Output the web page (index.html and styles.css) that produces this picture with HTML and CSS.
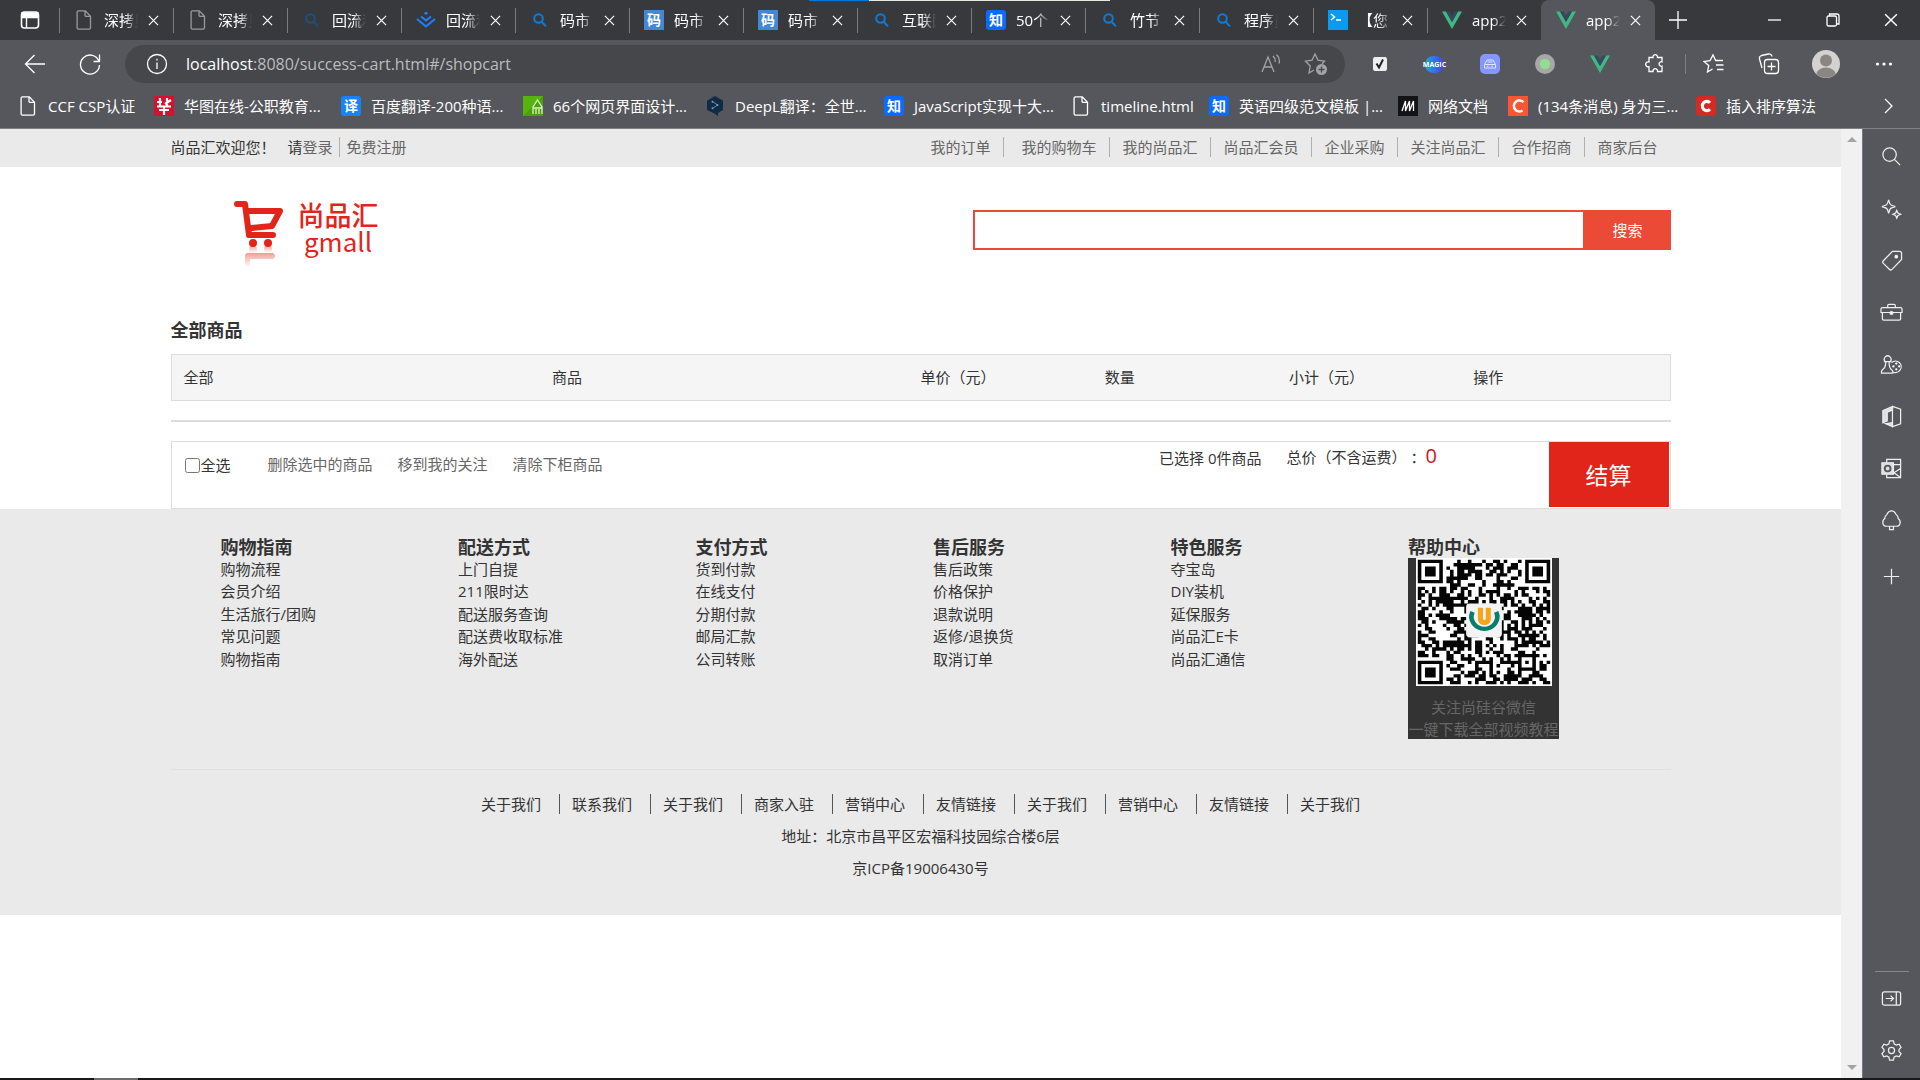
FILE: index.html
```html
<!DOCTYPE html>
<html lang="zh-CN">
<head>
<meta charset="utf-8">
<title>app2</title>
<link rel="stylesheet" href="styles.css">
</head>
<body>
<svg class="defs" aria-hidden="true">
  <symbol id="i-file" viewBox="0 0 20 20"><path d="M4.500 .8h6.800l5.200 5.400v11.600a1.400 1.400 0 0 1-1.400 1.400H4.500a1.400 1.400 0 0 1-1.400-1.400V2.200A1.400 1.400 0 0 1 4.500.8zM11 1v4.200a1.200 1.200 0 0 0 1.200 1.200h4"/></symbol>
  <symbol id="i-find" viewBox="0 0 20 20"><circle cx="8.500" cy="8.500" r="4.300"/><path d="M11.600 11.800l4.400 4.600"/></symbol>
  <symbol id="i-x" viewBox="0 0 12 12"><path d="M1 1l10 10M11 1L1 11"/></symbol>
  <symbol id="i-vue" viewBox="0 0 20 20"><path fill="#41b883" d="M0 1.500h4L10 12l6-10.500h4L10 19z"/><path fill="#34495e" d="M4 1.500h3.800L10 5.400l2.200-3.900H16L10 12z"/></symbol>
</svg>

<header class="chrome">
  <i class="load-done"></i><i class="load-rest"></i>
  <div class="tabs">
    <button class="tab-menu" aria-label="标签页操作"><svg width="20" height="20" viewBox="0 0 20 20"><rect x="1.500" y="2" width="17" height="16" rx="3" fill="none" stroke="#fff" stroke-width="1.600"/><path d="M2 3h16v4.500H2z" fill="#fff"/><path d="M6.500 7v11" stroke="#fff" stroke-width="1.400"/></svg></button>
    <div class="tab"><svg class="fav line dim"><use href="#i-file"/></svg><span>深拷贝</span><button aria-label="关闭"><svg><use href="#i-x"/></svg></button></div>
    <div class="tab"><svg class="fav line dim"><use href="#i-file"/></svg><span>深拷贝</span><button aria-label="关闭"><svg><use href="#i-x"/></svg></button></div>
    <div class="tab"><svg class="fav find dark"><use href="#i-find"/></svg><span>回流和</span><button aria-label="关闭"><svg><use href="#i-x"/></svg></button></div>
    <div class="tab"><svg class="fav" viewBox="0 0 20 20" fill="none" stroke="#1e80ff" stroke-width="2"><path d="M1 9l9 7.500L19 9M5 6.500l5 4 5-4"/><path d="M10 1.500l2.200 1.800L10 5 7.800 3.300z" fill="#1e80ff" stroke="none"/></svg><span>回流和</span><button aria-label="关闭"><svg><use href="#i-x"/></svg></button></div>
    <div class="tab"><svg class="fav find"><use href="#i-find"/></svg><span>码市</span><button aria-label="关闭"><svg><use href="#i-x"/></svg></button></div>
    <div class="tab"><b class="fav word ma">码</b><span>码市</span><button aria-label="关闭"><svg><use href="#i-x"/></svg></button></div>
    <div class="tab"><b class="fav word ma">码</b><span>码市</span><button aria-label="关闭"><svg><use href="#i-x"/></svg></button></div>
    <div class="tab"><svg class="fav find"><use href="#i-find"/></svg><span>互联网</span><button aria-label="关闭"><svg><use href="#i-x"/></svg></button></div>
    <div class="tab"><b class="fav word zhi">知</b><span>50个</span><button aria-label="关闭"><svg><use href="#i-x"/></svg></button></div>
    <div class="tab"><svg class="fav find"><use href="#i-find"/></svg><span>竹节</span><button aria-label="关闭"><svg><use href="#i-x"/></svg></button></div>
    <div class="tab"><svg class="fav find"><use href="#i-find"/></svg><span>程序员</span><button aria-label="关闭"><svg><use href="#i-x"/></svg></button></div>
    <div class="tab"><svg class="fav" viewBox="0 0 20 20"><path fill="#0a9bf0" d="M0 0h20v20H0z"/><path d="M3 4l3.500 3L3 10M8 10h5" fill="none" stroke="#fff" stroke-width="1.500"/></svg><span>【您</span><button aria-label="关闭"><svg><use href="#i-x"/></svg></button></div>
    <div class="tab"><svg class="fav"><use href="#i-vue"/></svg><span>app2</span><button aria-label="关闭"><svg><use href="#i-x"/></svg></button></div>
    <div class="tab active"><svg class="fav"><use href="#i-vue"/></svg><span>app2</span><button aria-label="关闭"><svg><use href="#i-x"/></svg></button></div>
    <button class="new-tab" aria-label="新建标签页"><svg width="18" height="18" viewBox="0 0 18 18"><path d="M9 0v18M0 9h18"/></svg></button>
    <div class="window-buttons">
      <button aria-label="最小化"><svg width="14" height="14" viewBox="0 0 14 14"><path d="M0 7h13"/></svg></button>
      <button aria-label="还原"><svg width="14" height="14" viewBox="0 0 14 14"><rect x="1" y="3" width="9.500" height="10" rx="1.500"/><path d="M3.500 3V1H11a2 2 0 0 1 2 2v8h-2"/></svg></button>
      <button aria-label="关闭窗口"><svg width="14" height="14" viewBox="0 0 12 12"><use href="#i-x"/></svg></button>
    </div>
  </div>

  <div class="toolbar">
    <button class="back" aria-label="后退"><svg width="22" height="22" viewBox="0 0 22 22"><path d="M21 11H2M10.500 2L1.500 11l9 9"/></svg></button>
    <button class="reload" aria-label="刷新"><svg width="22" height="22" viewBox="0 0 22 22"><path d="M20 8.500A9.500 9.500 0 1 0 20.500 12M20.500 1.500v7h-6"/></svg></button>
    <div class="address">
      <svg width="22" height="22" viewBox="0 0 22 22"><circle cx="11" cy="11" r="9.500"/><path d="M11 9.500v6.500M11 5.800v1.800"/></svg>
      <span class="url"><em>localhost</em>:8080/success-cart.html#/shopcart</span>
      <svg class="muted" width="22" height="22" viewBox="0 0 22 22"><path d="M2 19L8 4l6 15M4 14h8M13 3q3 3 2 6M16.500 1.500q4 4 2.500 9"/></svg>
      <svg class="muted" width="24" height="24" viewBox="0 0 24 24"><path d="M10 18l-5 3 1.200-7L1.500 9.200l6.500-1L11 2l3 6.200 6.500 1-2.500 2.500"/><circle cx="17.500" cy="17.500" r="5.500" fill="#a3a4a7" stroke="none"/><path d="M17.500 14.500v6M14.500 17.500h6" stroke="#46474b"/></svg>
    </div>
    <div class="extensions">
      <button aria-label="待办"><svg width="16" height="16" viewBox="0 0 16 16"><rect x="1" y="1" width="14" height="14" rx="2" fill="#eee" stroke="none"/><path d="M4.500 7.500l2.500 4 4-8" stroke="#222" stroke-width="2"/></svg></button>
      <button class="magic" aria-label="Magic"><b>MAGIC</b></button>
      <button aria-label="助手"><svg width="20" height="20" viewBox="0 0 20 20"><rect width="20" height="20" rx="5" fill="#8497ff" stroke="none"/><path d="M4.500 14V10.500L7 6h6l2.500 4.500V14zM5 10.500h10M7.500 8h5M7 12.300h1.500M11.500 12.300H13" stroke="#dfe4ff" stroke-width="1"/></svg></button>
      <button aria-label="状态"><svg width="20" height="20" viewBox="0 0 20 20"><circle cx="10" cy="10" r="10" fill="#a7a7a7" stroke="none"/><circle cx="10" cy="10" r="5.200" fill="#93dc93" stroke="none"/></svg></button>
      <button aria-label="Vue"><svg class="plain" width="20" height="20"><use href="#i-vue"/></svg></button>
      <button aria-label="扩展"><svg width="20" height="20" viewBox="0 0 20 20"><path d="M4 3.500h4a2.300 2.300 0 1 1 4.500 0H17v4.300a2.300 2.300 0 1 0 0 4.400v5.300h-4.500a2.300 2.300 0 1 0-4.500 0H4v-4.800a2.500 2.500 0 1 1 0-4.700z"/></svg></button>
    </div>
    <div class="tools">
      <button aria-label="收藏夹"><svg width="22" height="22" viewBox="0 0 22 22"><path d="M9.500 16l-5 3 1.200-6.500L1 8.500l6-.8L10 2l2.700 5.500H20M13 12h7.500M14 16.500h6.500"/></svg></button>
      <button aria-label="集锦"><svg width="22" height="22" viewBox="0 0 22 22"><rect x="6.500" y="6.500" width="14" height="14" rx="3"/><path d="M13.500 9.500v8M9.500 13.500h8M4 15l-2.500-9a3 3 0 0 1 2-3.500l7-1.500a3 3 0 0 1 3.500 2.500"/></svg></button>
      <button aria-label="个人资料"><svg width="28" height="28" viewBox="0 0 28 28"><g stroke="none"><circle cx="14" cy="14" r="14" fill="#d4d2cf"/><circle cx="14" cy="10.500" r="6" fill="#8a8683"/><path d="M4.500 24a9.500 6.500 0 0 1 19 0A14 14 0 0 1 4.500 24z" fill="#8a8683"/></g></svg></button>
      <button aria-label="更多"><svg width="18" height="6" viewBox="0 0 18 6"><g fill="#fff" stroke="none"><circle cx="2.500" cy="3" r="1.600"/><circle cx="9" cy="3" r="1.600"/><circle cx="15.500" cy="3" r="1.600"/></g></svg></button>
    </div>
  </div>

  <nav class="bookmarks">
    <a href="#"><svg class="fav line"><use href="#i-file"/></svg>CCF CSP认证</a>
    <a href="#"><svg class="fav" viewBox="0 0 20 20"><rect width="20" height="20" rx="1" fill="#d6112e"/><path d="M3 10.500h14M10 10v9M6 2v8M3 6h5M13 2v8M17 4l-6 4M5 14h10" stroke="#fff" stroke-width="2.200"/></svg>华图在线-公职教育...</a>
    <a href="#"><b class="fav word yi">译</b>百度翻译-200种语...</a>
    <a href="#"><svg class="fav" viewBox="0 0 20 20"><path fill="#57b30e" d="M0 0h20v20H0z"/><path fill="#3d9206" d="M0 20L20 0v20z" opacity=".5"/><path d="M10 18v-7l4.500-7 4.500 7v7M10 12h9M13 13v5M16 13v5" fill="none" stroke="#d9f3c0" stroke-width="1.300"/></svg>66个网页界面设计...</a>
    <a href="#"><svg class="fav" viewBox="0 0 20 20"><path fill="#0f2b46" d="M10 0l8 4.700v9.200l-5 3V20l-4-2.700-7-3.400V4.700z"/><path d="M7.500 5.500L12.500 9l-5 3.500" fill="none" stroke="#6e8aa3"/><g fill="#7d98b0"><circle cx="7.500" cy="5.800" r="1"/><circle cx="12.500" cy="9" r="1"/><circle cx="7.500" cy="12.200" r="1"/></g></svg>DeepL翻译：全世...</a>
    <a href="#"><b class="fav word zhi">知</b>JavaScript实现十大...</a>
    <a href="#"><svg class="fav line"><use href="#i-file"/></svg>timeline.html</a>
    <a href="#"><b class="fav word zhi">知</b>英语四级范文模板 |...</a>
    <a href="#"><svg class="fav" viewBox="0 0 20 20"><path fill="#121217" d="M0 0h20v20H0z"/><path d="M4 15L7.500 5v10L11.500 5v10L15.500 5v10" fill="none" stroke="#fff" stroke-width="1.300"/></svg>网络文档</a>
    <a href="#"><svg class="fav" viewBox="0 0 20 20"><path fill="#fc5531" d="M0 0h20v20H0z"/><path d="M15.500 6.200A5.500 5.500 0 1 0 14.500 14.500" fill="none" stroke="#fff" stroke-width="2.600"/></svg>(134条消息) 身为三...</a>
    <a href="#"><svg class="fav" viewBox="0 0 20 20"><rect width="20" height="20" rx="3" fill="#d32a23"/><path d="M14 6.800A4.400 4.700 0 1 0 14 13.200" fill="none" stroke="#fff" stroke-width="3.200"/></svg>插入排序算法</a>
    <button aria-label="更多书签"><svg width="10" height="16" viewBox="0 0 10 16"><path d="M1 1l7 7-7 7"/></svg></button>
  </nav>
</header>

<div class="window">
  <div class="page">
    <div class="topbar">
      <div class="container topbar-row">
        <p><span class="welcome">尚品汇欢迎您！</span>请<a href="#">登录</a><a href="#" class="register">免费注册</a></p>
        <ul>
          <li><a href="#">我的订单</a></li><li><a href="#">我的购物车</a></li><li><a href="#">我的尚品汇</a></li><li><a href="#">尚品汇会员</a></li><li><a href="#">企业采购</a></li><li><a href="#">关注尚品汇</a></li><li><a href="#">合作招商</a></li><li><a href="#">商家后台</a></li>
        </ul>
      </div>
    </div>

    <div class="container masthead">
      <a href="#" class="logo">
        <svg width="50" height="68" viewBox="0 0 50 68">
          <defs><linearGradient id="fade" x1="0" y1="0" x2="0" y2="1"><stop offset="0" stop-color="#e1251b" stop-opacity=".45"/><stop offset="1" stop-color="#e1251b" stop-opacity="0"/></linearGradient></defs>
          <g fill="none" stroke="#e1251b" stroke-width="6" stroke-linecap="round" stroke-linejoin="round"><path d="M3 4h8l4 31h24M14 11h32l-8 15-20 2"/></g>
          <circle cx="19" cy="43" r="4" fill="#e1251b"/><circle cx="34" cy="43" r="4" fill="#e1251b"/>
          <g fill="url(#fade)"><circle cx="19" cy="49" r="4"/><circle cx="34" cy="49" r="4"/><path d="M11 56q0-3 3-3h25q4 3 0 6H16v8h-5z"/></g>
        </svg>
        <span class="logo-text"><span class="cn">尚品汇</span><span class="en">gmall</span></span>
      </a>
      <form class="search"><input type="text" aria-label="搜索商品"><button type="button">搜索</button></form>
    </div>

    <main class="container">
      <h4>全部商品</h4>
      <table class="cart-head">
        <colgroup><col span="2" class="wide"><col span="4"></colgroup>
        <thead><tr><th>全部</th><th>商品</th><th>单价（元）</th><th>数量</th><th>小计（元）</th><th>操作</th></tr></thead>
      </table>
      <div class="cart-list"></div>
      <div class="cart-tool">
        <label><input type="checkbox">全选</label>
        <div class="options"><a href="#">删除选中的商品</a><a href="#">移到我的关注</a><a href="#">清除下柜商品</a></div>
        <div class="chosen">已选择 0件商品</div>
        <div class="sum">总价（不含运费） ：<strong>0</strong></div>
        <button type="button">结算</button>
      </div>
    </main>

    <footer>
      <div class="container">
        <div class="guides">
          <section><h4>购物指南</h4><ul><li>购物流程</li><li>会员介绍</li><li>生活旅行/团购</li><li>常见问题</li><li>购物指南</li></ul></section>
          <section><h4>配送方式</h4><ul><li>上门自提</li><li>211限时达</li><li>配送服务查询</li><li>配送费收取标准</li><li>海外配送</li></ul></section>
          <section><h4>支付方式</h4><ul><li>货到付款</li><li>在线支付</li><li>分期付款</li><li>邮局汇款</li><li>公司转账</li></ul></section>
          <section><h4>售后服务</h4><ul><li>售后政策</li><li>价格保护</li><li>退款说明</li><li>返修/退换货</li><li>取消订单</li></ul></section>
          <section><h4>特色服务</h4><ul><li>夺宝岛</li><li>DIY装机</li><li>延保服务</li><li>尚品汇E卡</li><li>尚品汇通信</li></ul></section>
          <section><h4>帮助中心</h4>
            <div class="wechat">
              <svg width="136" height="128" viewBox="0 0 38 38" preserveAspectRatio="none">
                <path fill="#fff" d="M0 0h38v38H0z"/><path id="qr" fill="#050505"/>
                <rect x="14" y="13.500" width="10" height="10" rx="1" fill="#f3f3f3"/>
                <path d="M15.800 16a3.600 3.600 0 1 0 6.600 0" fill="none" stroke="#087d6c" stroke-width="1.300"/>
                <path d="M18 14.800v3.500a1.200 1.500 0 0 0 2.200 0v-3.500" fill="none" stroke="#f7a518" stroke-width="1.400"/>
              </svg>
              <p>关注尚硅谷微信</p><p>一键下载全部视频教程</p>
            </div>
          </section>
        </div>
        <ul class="links"><li>关于我们</li><li>联系我们</li><li>关于我们</li><li>商家入驻</li><li>营销中心</li><li>友情链接</li><li>关于我们</li><li>营销中心</li><li>友情链接</li><li>关于我们</li></ul>
        <p class="legal">地址：北京市昌平区宏福科技园综合楼6层</p>
        <p class="legal">京ICP备19006430号</p>
      </div>
    </footer>
  </div>

  <div class="scrollbar"><i class="up"></i><i class="down"></i></div>

  <aside class="sidebar">
    <button aria-label="搜索"><svg viewBox="0 0 24 24"><circle cx="10" cy="10" r="7"/><path d="M15 15l6 6"/></svg></button>
    <button aria-label="发现"><svg viewBox="0 0 24 24"><path d="M9 3q1 4 2 5t5 2q-4 1-5 2t-2 5q-1-4-2-5t-5-2q4-1 5-2t2-5zM17.500 14l1.200 2.800 2.800 1.200-2.800 1.200-1.200 2.800-1.200-2.800-2.800-1.200 2.800-1.200z"/></svg></button>
    <button aria-label="购物"><svg viewBox="0 0 24 24"><path d="M13 2.500h7.500a2 2 0 0 1 2 2V11L12.500 21.200a2 2 0 0 1-2.800 0L3.500 15a2 2 0 0 1 0-2.800z"/><circle cx="17" cy="8" r="1.300" fill="#fff"/></svg></button>
    <button aria-label="工具"><svg viewBox="0 0 24 24"><path d="M8 7V5a1.500 1.500 0 0 1 1.500-1.500h5A1.500 1.500 0 0 1 16 5v2M1 8.500Q1 7 2.500 7h19Q23 7 23 8.500V12H1zM2.500 12v6.500q0 1.500 1.500 1.500h16q1.500 0 1.500-1.500V12"/><circle cx="12" cy="12.500" r="1.500" fill="#fff"/></svg></button>
    <button aria-label="游戏"><svg viewBox="0 0 24 24"><path d="M5.500 9a3.500 3.500 0 1 1 5 0M4 9h8M6 9.500q0 6-3 7.500Q1 18.500 1.500 21h12q.5-2.500-2-4-2-2-2-7.500M12 10a6 6 0 1 1 1 9.500"/><g fill="#fff" stroke="none"><circle cx="17" cy="11" r="1.200"/><circle cx="14" cy="14" r="1.200"/><circle cx="20" cy="14" r="1.200"/><circle cx="17" cy="17" r="1.200"/></g></svg></button>
    <button aria-label="Office"><svg viewBox="0 0 24 24"><path d="M13 1.500l8.500 2.800v15.400L13 22.500V2"/><path d="M13 1.500v3.800L7.500 7.500v9L3 18.500V5.800zM6 19.500l7-1v4z" fill="#ddd"/></svg></button>
    <button aria-label="Outlook"><svg viewBox="0 0 24 24"><path d="M7 6V2.500h14.500v19H7V18M14 8h7.500M21.500 12l-7 4.500 7 5"/><path d="M2 6h12v12H2z" fill="#ddd"/><circle cx="8" cy="12" r="3" stroke="#56575c" stroke-width="2"/></svg></button>
    <button aria-label="树"><svg viewBox="0 0 24 24"><path d="M12 2c3 0 4 2 5 4 2 1 2 3 2 4 3 2 3 8-2 8H7c-5 0-5-6-2-8 0-1 0-3 2-4 1-2 2-4 5-4zM10 18v3.500h4V18"/></svg></button>
    <button class="add" aria-label="添加"><svg viewBox="0 0 24 24"><path d="M12 4v16M4 12h16"/></svg></button>
    <hr>
    <button aria-label="隐藏侧栏"><svg viewBox="0 0 24 24"><rect x="2.500" y="5" width="19" height="14" rx="2"/><path d="M17 5v14M6 12h8M11 9l3 3-3 3"/></svg></button>
    <button aria-label="设置"><svg viewBox="0 0 24 24"><path d="M10 2h4l.7 3 2.300 1.300 3-.9 2 3.400L19.800 11v2l2.200 2.200-2 3.400-3-.9-2.300 1.300-.7 3h-4l-.7-3L7 17.700l-3 .9-2-3.400L4.200 13v-2L2 8.800l2-3.400 3 .9L9.300 5z"/><circle cx="12" cy="12" r="3.200"/></svg></button>
  </aside>
</div>
<div class="taskbar"></div>
<script src="qr.js"></script>
</body>
</html>
```
FILE: styles.css
```css
* { box-sizing: border-box; margin: 0; padding: 0; }
body { height: 100vh; display: flex; flex-direction: column; overflow: hidden; font: 15px/22px "Open Sans", "Noto Sans CJK SC", sans-serif; color: #333; background: #fff; }
ul { list-style: none; }
a { color: inherit; text-decoration: none; }
em { font-style: normal; }
button { border: 0; background: none; font: inherit; color: inherit; display: flex; align-items: center; justify-content: center; flex: none; }
.defs { position: absolute; width: 0; height: 0; }

/* browser frame */
.chrome { position: relative; flex: none; color: #fff; background: #56575c; border-bottom: 1px solid #808185; }
.chrome button svg, .address svg, .sidebar svg { fill: none; stroke: #fff; stroke-width: 1.300; }
.chrome svg.plain { stroke: none; }
.chrome .address .muted { stroke: #a3a4a7; }
.load-done, .load-rest { position: absolute; top: 0; height: 1px; }
.load-done { left: 809px; width: 60px; background: #0078d7; }
.load-rest { left: 869px; width: 241px; background: #e3e8e3; }
.tabs { height: 40px; display: flex; align-items: center; background: #38393d; }
.tab-menu { width: 59px; }
.tab { width: 114px; height: 40px; flex: none; display: flex; align-items: center; padding-left: 15px; background: linear-gradient(#7a7b7e, #7a7b7e) left center / 1px 25px no-repeat; }
.tab.active { background: #56575c; border-radius: 8px 8px 0 0; }
.fav { width: 20px; height: 20px; flex: none; }
.tab span { width: 34px; margin-left: 10px; overflow: hidden; white-space: nowrap; -webkit-mask-image: linear-gradient(90deg, #000 60%, transparent); mask-image: linear-gradient(90deg, #000 60%, transparent); }
.tab button { width: 10px; margin-left: 10px; }
.tab button svg { width: 11px; height: 11px; flex: none; }
.line { fill: none; stroke: #fff; stroke-width: 1.300; }
.dim { stroke: #98999b; }
.find { fill: none; stroke: #0f7bd8; stroke-width: 2; }
.find.dark { stroke: #1d507c; }
.word { font-size: 14px; line-height: 20px; text-align: center; color: #fff; border-radius: 3px; }
.ma { background: #4387d9; border-radius: 0; }
.zhi { background: #0a6cff; }
.yi { background: #1683fb; }
.new-tab { width: 46px; }
.window-buttons { display: flex; margin-left: auto; }
.window-buttons button { width: 58px; height: 40px; }

.toolbar { height: 48px; display: flex; align-items: center; }
.toolbar .back { width: 70px; }
.toolbar .reload { width: 40px; margin-right: 15px; }
.address { flex: 1; height: 38px; display: flex; align-items: center; gap: 22px; padding: 0 17px 0 21px; border-radius: 19px; background: #46474b; }
.url { flex: 1; margin-left: -4px; font-size: 16px; color: #bbbcbe; }
.url em { color: #fff; }
.extensions, .tools { display: flex; align-items: center; }
.extensions { margin-left: 7px; }
.extensions button, .tools button { width: 55px; height: 30px; }
.tools { border-left: 1px solid #7d7e82; height: 20px; margin-left: 3px; padding-right: 9px; }
.tools button:nth-child(3) { width: 60px; }
.magic b { width: 19px; height: 17px; border-radius: 9px; background: linear-gradient(90deg, #19a9df, #4a3cf0); font-size: 7px; line-height: 17px; display: flex; justify-content: center; }

.bookmarks { height: 40px; padding-left: 18px; display: grid; grid-template-columns: 136px 187px 182px 182px 179px 187px 138px 189px 110px 188px 162px 1fr; align-items: center; padding-bottom: 5px; }
.bookmarks a { display: flex; align-items: center; gap: 10px; white-space: nowrap; }

.window { flex: 1; min-height: 0; display: flex; }
.page { flex: 1; min-width: 0; overflow: hidden; }
.scrollbar { width: 21px; padding: 8px 5px; display: flex; flex-direction: column; justify-content: space-between; align-items: center; background: #f1f1f1; }
.scrollbar i { width: 0; height: 0; border: 5px solid transparent; }
.scrollbar .up { border-top: 0; border-bottom-color: #a3a3a3; }
.scrollbar .down { border-bottom: 0; border-top-color: #a3a3a3; }
.sidebar { width: 58px; display: flex; flex-direction: column; align-items: center; padding: 1px 0 2px; background: #56575c; border-left: 1px solid #77787c; }
.sidebar button { width: 48px; height: 52px; }
.sidebar .add { height: 60px; }
.sidebar svg { width: 23px; height: 23px; stroke: #eee; }
.sidebar hr { width: 34px; margin-top: auto; border: 0; border-top: 1px solid #85868a; }
.taskbar { flex: none; height: 2px; background: linear-gradient(90deg, #17181a 94px, #6b6c6e 94px, #6b6c6e 138px, #17181a 138px); }

/* shop */
.container { width: 1500px; max-width: 100%; margin: 0 auto; }
.topbar { background: #eaeaea; }
.topbar-row { height: 38px; display: flex; justify-content: space-between; align-items: center; padding-bottom: 2px; }
.topbar a { color: #666; }
.topbar ul { display: flex; }
.topbar li { padding: 0 13px 0 12px; line-height: 20px; }
.topbar li + li { border-left: 1px solid #b3aeae; }
.topbar li:nth-child(2) { padding-left: 17px; }
.welcome { margin-right: 12px; }
.register { display: inline-block; line-height: 20px; margin-left: 6px; padding-left: 7px; border-left: 1px solid #b3aeae; }
.masthead { height: 150px; display: flex; justify-content: space-between; align-items: flex-start; }
.logo { display: flex; gap: 14px; padding: 33px 0 0 63px; color: #e1251b; }
.logo-text { display: flex; flex-direction: column; align-items: center; font-family: "Noto Sans CJK SC", sans-serif; font-weight: 500; }
.logo-text .cn { font-size: 27px; line-height: 29px; }
.logo-text .en { font-size: 26px; line-height: 24px; font-weight: 400; }
.search { display: flex; width: 698px; height: 40px; margin-top: 43px; }
.search input { flex: 1; min-width: 0; border: 2px solid #ea4a36; outline: 0; padding: 0 4px; font: inherit; }
.search button { width: 86px; color: #fff; background: #ea4a36; }
h4 { font-size: 18px; line-height: 22px; }
main h4 { padding: 2px 0 13px; }
.cart-head { width: 100%; height: 47px; table-layout: fixed; border-collapse: separate; border-spacing: 0; padding: 0 12px; background: #f5f5f5; border: 1px solid #ddd; }
.cart-head th { font-weight: 400; text-align: left; padding-bottom: 2px; }
.cart-head .wide { width: 25%; }
.cart-list { height: 2px; margin: 19px 0; background: #ddd; }
.cart-tool { height: 68px; display: flex; align-items: flex-start; padding-right: 1px; border: 1px solid #ddd; }
.cart-tool label { display: flex; align-items: center; margin-left: 13px; padding-top: 12px; }
.cart-tool label input { width: 15px; height: 15px; margin-right: 1px; }
.options { display: flex; gap: 25px; margin-left: 37px; padding-top: 11px; color: #666; }
.chosen { margin-left: auto; padding-top: 5px; }
.sum { width: 262px; margin-left: 25px; padding-top: 3px; white-space: pre; }
.sum strong { color: #c81623; font-size: 20px; font-weight: 400; }
.cart-tool button { width: 120px; height: 65px; color: #fff; background: #e1251b; font-size: 23px; }
footer { background: #eaeaea; padding: 27px 0 26px; }
.guides { display: grid; grid-template-columns: repeat(6, 1fr); height: 234px; padding: 0 25px 0 50px; border-bottom: 1px solid #e1e1e1; }
.guides ul { display: grid; grid-auto-rows: 1fr; height: 112px; }
.wechat { width: 151px; height: 181px; background: #333; color: #666; text-align: center; }
.wechat svg { display: block; margin: 0 auto 10px; }
.wechat p { white-space: nowrap; }
.links { display: flex; justify-content: center; margin: 24px 0 11px; }
.links li { line-height: 20px; padding: 0 18px 0 12px; border-left: 1px solid #555; }
.links li:first-child { border-left: 0; }
.links li:last-child { padding-right: 12px; }
.legal { text-align: center; margin-bottom: 10px; }
```
FILE: qr.js
```js
// Fills the WeChat code: three finder squares, one alignment square, data modules between.
const size = 37;
const corners = [[0, 0], [size - 7, 0], [0, size - 7]];
let seed = 20190;
let d = '';

function ring(x, y, n) {
  const r = Math.max(Math.abs(x), Math.abs(y));
  return n === 7 ? r !== 2 && r <= 3 : r !== 1 && r <= 2;
}

for (let y = 0; y < size; y++) {
  for (let x = 0; x < size; x++) {
    seed = (seed * 1103515245 + 12345) % 2147483648;
    let on = (seed >> 12) % 100 < 52;
    for (const [cx, cy] of corners) {
      if (Math.abs(x - cx - 3) <= 4 && Math.abs(y - cy - 3) <= 4) on = ring(x - cx - 3, y - cy - 3, 7);
    }
    if (Math.abs(x - 30) <= 2 && Math.abs(y - 30) <= 2) on = ring(x - 30, y - 30, 5);
    if (on) d += `M${x + .5} ${y + .5}h1v1h-1z`;
  }
}
document.getElementById('qr').setAttribute('d', d);
```
